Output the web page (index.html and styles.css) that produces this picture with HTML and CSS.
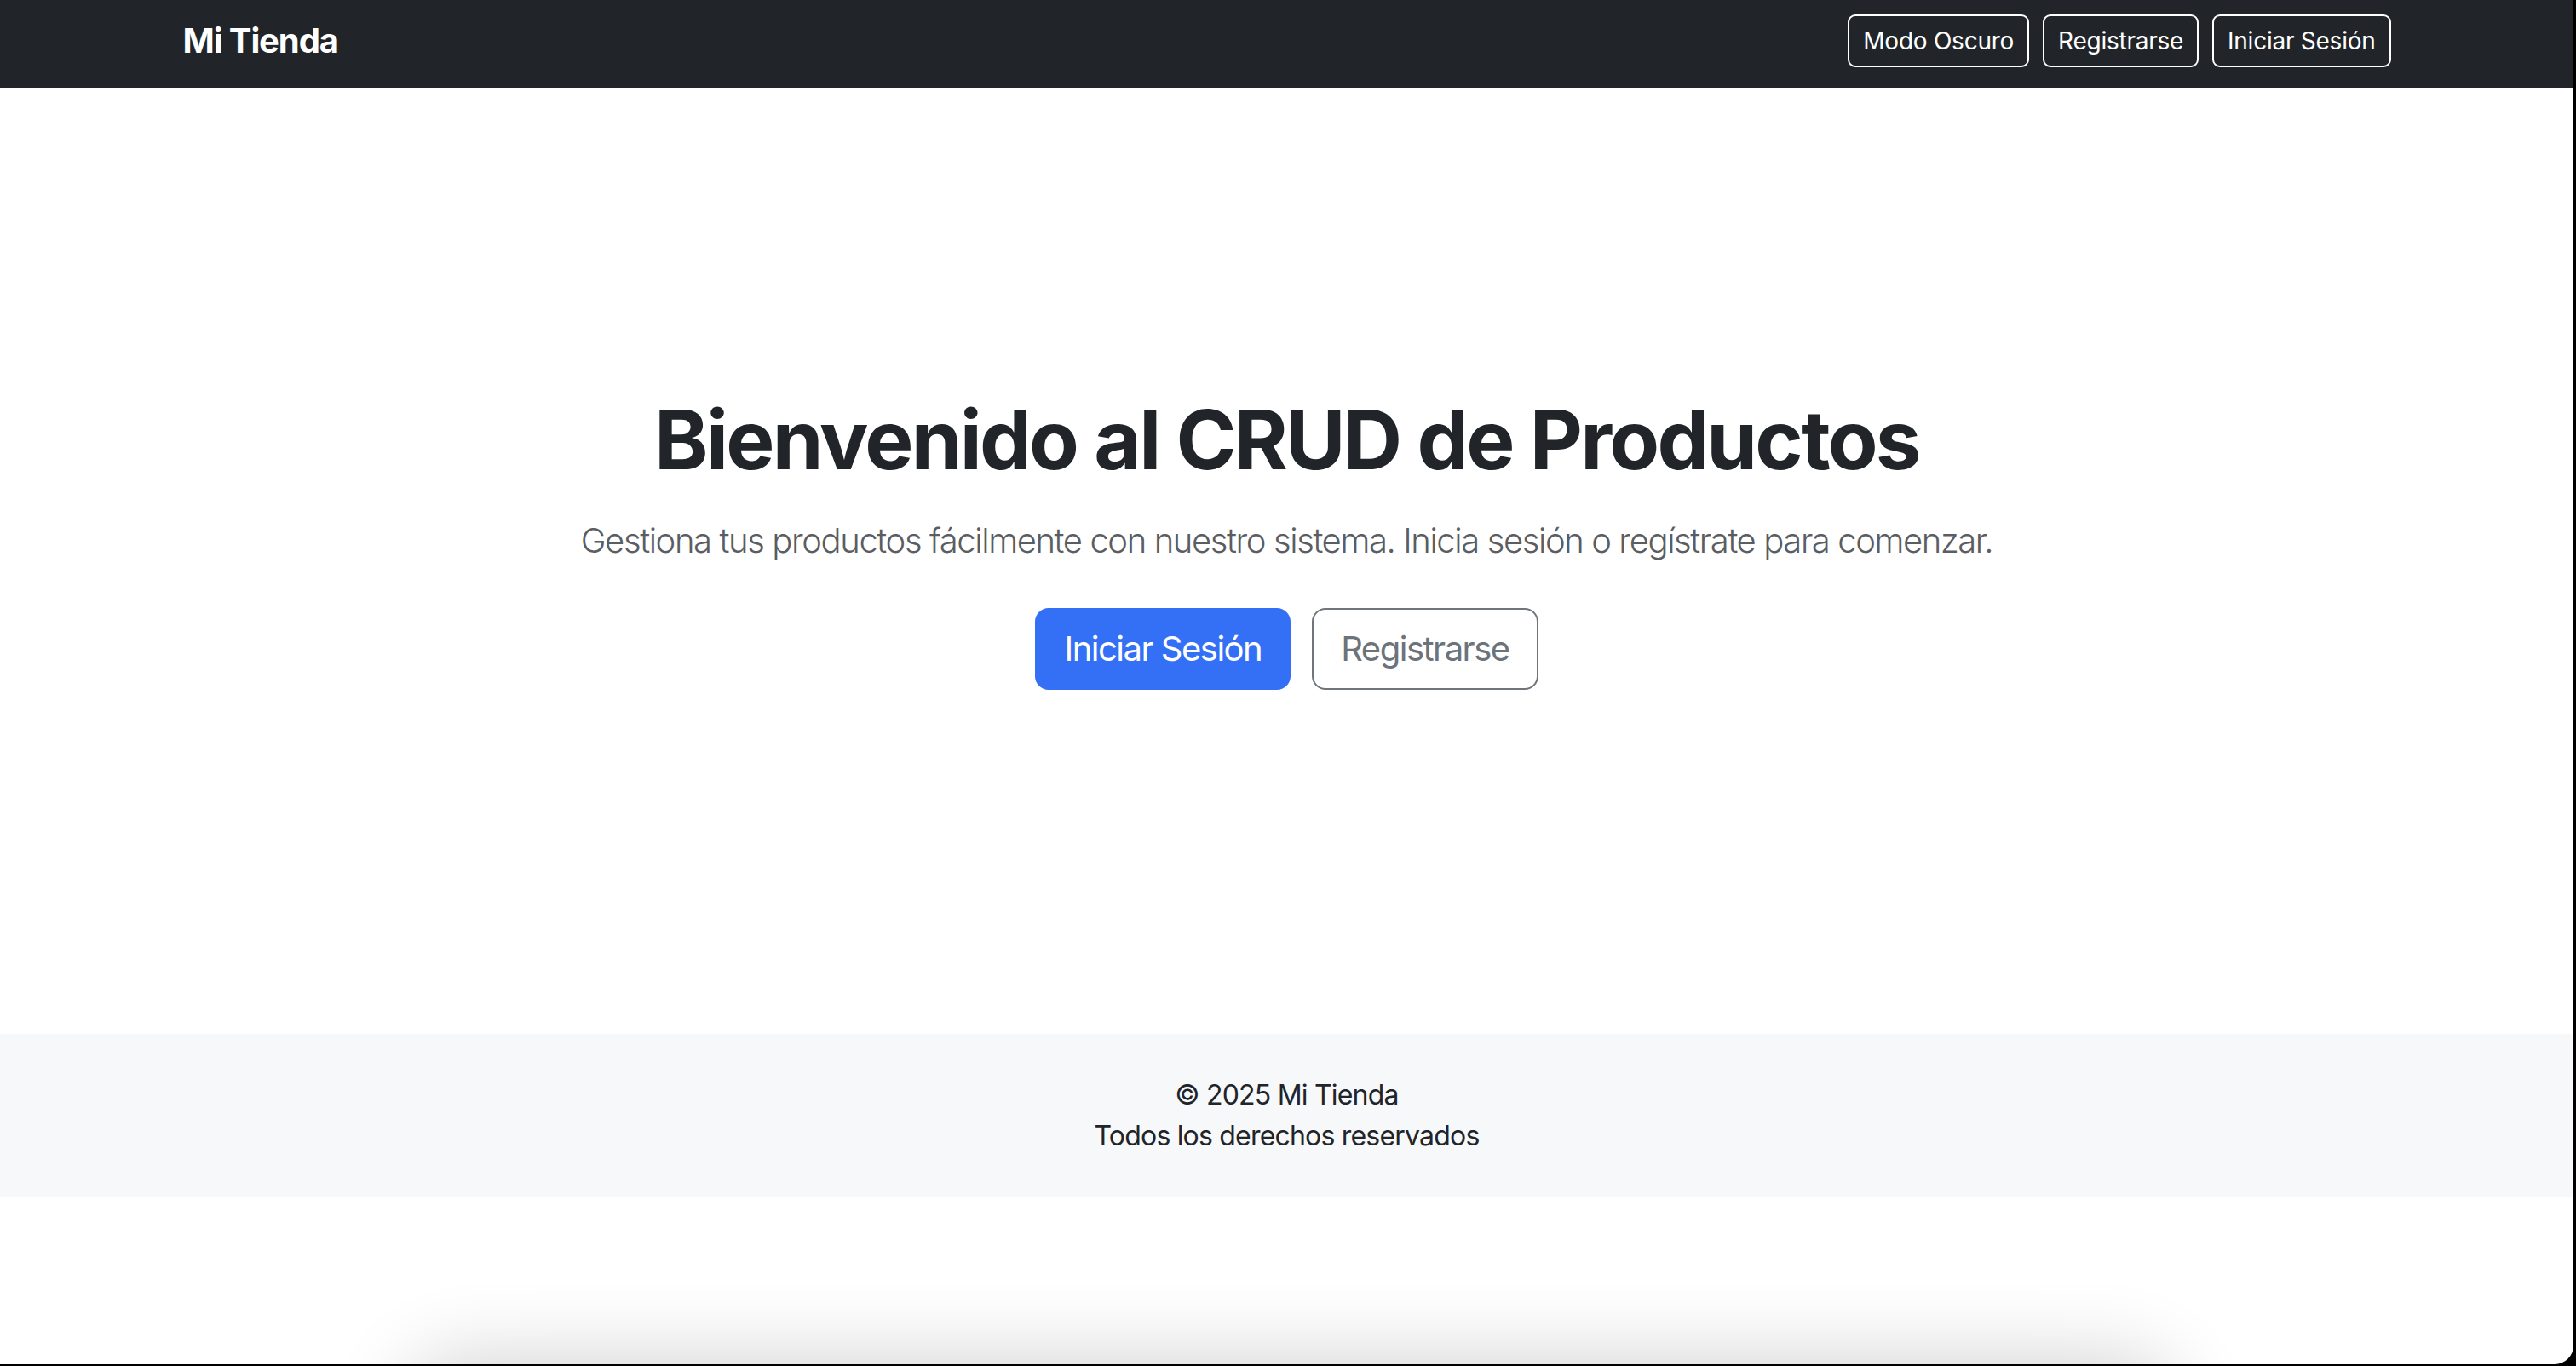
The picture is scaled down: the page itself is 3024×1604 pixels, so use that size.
FILE: index.html
```html
<!DOCTYPE html>
<html lang="es">
<head>
<meta charset="utf-8">
<title>Mi Tienda</title>
<link rel="stylesheet" href="styles.css">
</head>
<body>
<div class="window">
  <nav class="navbar">
    <div class="container nav-inner">
      <a class="brand" href="#">Mi Tienda</a>
      <div class="nav-actions">
        <button class="btn-nav">Modo Oscuro</button>
        <button class="btn-nav">Registrarse</button>
        <button class="btn-nav">Iniciar Sesión</button>
      </div>
    </div>
  </nav>
  <main class="hero">
    <h1 class="hero-title">Bienvenido al CRUD de Productos</h1>
    <p class="hero-lead">Gestiona tus productos fácilmente con nuestro sistema. Inicia sesión o regístrate para comenzar.</p>
    <div class="hero-actions">
      <a class="btn-lg btn-primary" href="#">Iniciar Sesión</a>
      <a class="btn-lg btn-outline" href="#">Registrarse</a>
    </div>
  </main>
  <footer class="footer">
    <p class="footer-line">© 2025 Mi Tienda</p>
    <p class="footer-line">Todos los derechos reservados</p>
  </footer>
  <div class="dock-shadow"></div>
</div>
</body>
</html>
```

FILE: styles.css
```css
* { box-sizing: border-box; }
html, body { margin: 0; padding: 0; }
body {
  background: #000;
  width: 3024px;
  height: 1604px;
  overflow: hidden;
  font-family: Inter, "Noto Sans", "Liberation Sans", sans-serif;
  color: #212529;
  font-size: 32px;
  line-height: 1.5;
}
.window {
  position: relative;
  width: 3021px;
  height: 1602px;
  background: #fff;
  border-bottom-right-radius: 22px;
  overflow: hidden;
  display: flex;
  flex-direction: column;
}
.container {
  width: 100%;
  max-width: 2640px;
  margin: 0 auto;
  padding: 0 24px;
}
.navbar {
  background: #212529;
  height: 103px;
  padding-bottom: 8px;
  display: flex;
}
.nav-inner {
  display: flex;
  align-items: center;
  justify-content: space-between;
}
.brand {
  color: #fff;
  text-decoration: none;
  font-weight: 700;
  font-size: 40px;
  line-height: 60px;
  letter-spacing: -1.1px;
}
.nav-actions {
  display: flex;
  gap: 16px;
}
.btn-nav {
  font-family: inherit;
  background: transparent;
  color: #fff;
  border: 2px solid #fff;
  border-radius: 9px;
  font-size: 28px;
  line-height: 42px;
  padding: 8px 16px;
  letter-spacing: -0.25px;
}
.hero {
  height: 1111px;
  flex: none;
  padding-top: 356px;
  display: flex;
  flex-direction: column;
  align-items: center;
  text-align: center;
}
.hero-title {
  margin: 0 0 31px;
  font-size: 96px;
  font-weight: 700;
  line-height: 115px;
  letter-spacing: -2.7px;
  color: #212529;
}
.hero-lead {
  margin: 0 0 49px;
  font-size: 40px;
  font-weight: 300;
  line-height: 60px;
  color: #5a5d61;
  letter-spacing: -1.4px;
}
.hero-actions {
  display: flex;
  gap: 25px;
}
.btn-lg {
  display: inline-block;
  font-size: 40px;
  line-height: 60px;
  padding: 16px 32px;
  border: 2px solid transparent;
  border-radius: 16px;
  text-decoration: none;
  letter-spacing: -1.5px;
}
.btn-primary {
  background: #3470f5;
  border-color: #3470f5;
  color: #fff;
}
.btn-outline {
  background: #fff;
  border-color: #70757c;
  color: #6c737a;
}
.footer {
  flex: none;
  background: #f7f8fa;
  padding: 48px 0;
  text-align: center;
}
.footer-line {
  margin: 0;
  font-size: 32px;
  line-height: 48px;
  color: #212529;
  letter-spacing: -0.8px;
}
.dock-shadow {
  position: absolute;
  left: 520px;
  width: 1990px;
  top: 1650px;
  height: 60px;
  border-radius: 60px;
  box-shadow: 0 -10px 90px 50px rgba(0, 0, 0, 0.16);
}
```
